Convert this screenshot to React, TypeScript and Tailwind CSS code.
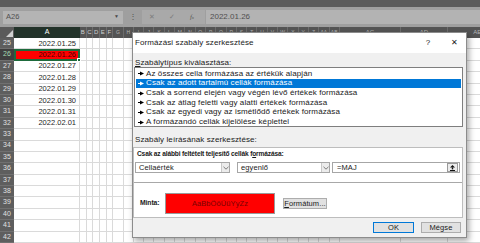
import React from 'react';

const narrowA = ['B', 'C', 'D', 'E', 'F'];
const narrowB = ['G', 'H', 'I', 'J', 'K', 'L', 'M', 'N', 'O', 'P', 'Q', 'R', 'S', 'T', 'U', 'V', 'W', 'X', 'Y', 'Z', 'AA', 'AB'];
const wide = [
  { l: 'AC', c: 'w-[61px]' },
  { l: 'AD', c: 'w-[47px]' },
  { l: 'AE', c: 'w-[60px]' },
];

const rows: { n: number; v: string }[] = [
  { n: 25, v: '2022.01.25' },
  { n: 26, v: '2022.01.26' },
  { n: 27, v: '2022.01.27' },
  { n: 28, v: '2022.01.28' },
  { n: 29, v: '2022.01.29' },
  { n: 30, v: '2022.01.30' },
  { n: 31, v: '2022.01.31' },
  { n: 32, v: '2022.02.01' },
  ...[33, 34, 35, 36, 37, 38, 39, 40, 41, 42].map((n) => ({ n, v: '' })),
];

const items = [
  'Az összes cella formázása az értékük alapján',
  'Csak az adott tartalmú cellák formázása',
  'Csak a sorrend elején vagy végén lévő értékek formázása',
  'Csak az átlag feletti vagy alatti értékek formázása',
  'Csak az egyedi vagy az ismétlődő értékek formázása',
  'A formázandó cellák kijelölése képlettel',
];

function Arrow({ white }: { white?: boolean }) {
  const c = white ? '#ffffff' : '#000000';
  return (
    <svg width="6" height="5" viewBox="0 0 6 5" className="shrink-0">
      <line x1="0" y1="2.5" x2="3" y2="2.5" stroke={c} strokeWidth="1" />
      <polygon points="2,0.5 6,2.5 2,4.5" fill={c} />
    </svg>
  );
}

function Chevron() {
  return (
    <svg width="6" height="4" viewBox="0 0 6 4">
      <polyline points="0.5,0.8 3,3.2 5.5,0.8" fill="none" stroke="#606060" strokeWidth="0.8" />
    </svg>
  );
}

function Row({ n, v }: { n: number; v: string }) {
  const sel = n === 26;
  return (
    <div className="flex h-[11.4px] shrink-0">
      <div
        className={
          sel
            ? 'w-[14px] shrink-0 flex items-center justify-center text-[7px] border-b border-[#707070] bg-[#3f3f3f] text-[#a6dcb0]'
            : 'w-[14px] shrink-0 flex items-center justify-center text-[7px] border-b border-[#707070] bg-[#5e5e5e] text-[#e0e0e0]'
        }
      >
        {n}
      </div>
      {sel ? (
        <div className="relative w-[66px] shrink-0 bg-[#ff0000] border-2 border-[#1e6b3c] text-[#4a0000] text-[7.5px] flex items-center justify-end pr-[2px]">
          {v}
          <div className="absolute z-10 -right-[3px] -bottom-[3px] w-[4px] h-[4px] bg-[#1e6b3c] border border-white" />
        </div>
      ) : (
        <div className="w-[66px] shrink-0 border-r border-b border-[#dadada] text-[7.5px] text-[#262626] flex items-center justify-end pr-[3px]">
          {v}
        </div>
      )}
      {narrowA.map((c) => (
        <div key={c} className="w-[6.67px] shrink-0 border-r border-b border-[#dadada]" />
      ))}
      {narrowB.map((c) => (
        <div key={c} className="w-[10.3px] shrink-0 border-r border-b border-[#dadada]" />
      ))}
      {wide.map((c) => (
        <div key={c.l} className={c.c + ' shrink-0 border-r border-b border-[#dadada]'} />
      ))}
    </div>
  );
}

export default function App() {
  return (
    <div className="relative w-[480px] h-[243px] overflow-hidden bg-white font-['Liberation_Sans',Arial,sans-serif] flex flex-col">
      {/* top strip */}
      <div className="h-[7px] shrink-0 bg-[#5b5b5b]" />
      {/* formula bar */}
      <div className="h-[20px] shrink-0 bg-[#9f9f9f] flex items-center">
        <div className="ml-[3px] w-[120px] h-[13px] bg-[#b4b4b4] flex items-center pl-[3px] pr-[4px] text-[7.5px] text-[#505050]">
          <span className="flex-1">A26</span>
          <span className="text-[5px] text-[#4a4a4a]">▼</span>
        </div>
        <div className="w-[19px] text-center text-[8px] text-[#505050] leading-none">⋮</div>
        <div className="w-[63px] h-[14px] bg-[#a9a9a9] flex items-center text-[7px] text-[#7c7c7c]">
          <span className="w-[20px] text-center">✕</span>
          <span className="w-[20px] text-center">✓</span>
          <span className="w-[20px] text-center italic font-['Liberation_Serif',serif] text-[#5a5a5a]">
            f<span className="text-[5px]">x</span>
          </span>
        </div>
        <div className="ml-[1px] flex-1 h-[14px] bg-[#b3b3b3] flex items-center pl-[4px] text-[8px] text-[#505050]">
          2022.01.26
        </div>
      </div>
      {/* column headers */}
      <div className="flex h-[11px] shrink-0 bg-[#545454]">
        <div className="relative w-[14px] shrink-0 bg-[#5a5a5a]">
          <svg width="7" height="7" viewBox="0 0 7 7" className="absolute right-[1px] bottom-[1px]">
            <polygon points="7,0 7,7 0,7" fill="#cfcfcf" />
          </svg>
        </div>
        <div className="w-[66px] shrink-0 bg-[#23332a] text-white text-[7px] flex items-center justify-center">A</div>
        {narrowA.map((c) => (
          <div key={c} className="w-[6.67px] shrink-0 border-r border-[#6c6c6c] text-[#d0d0d0] text-[6px] flex items-center justify-center">
            {c}
          </div>
        ))}
        {narrowB.map((c) => (
          <div key={c} className="w-[10.3px] shrink-0 border-r border-[#6c6c6c] text-[#b4b4b4] text-[5px] flex items-center justify-center overflow-hidden">
            {c}
          </div>
        ))}
        {wide.map((c) => (
          <div key={c.l} className={c.c + ' shrink-0 border-r border-[#6c6c6c] text-[#b4b4b4] text-[6px] flex items-center justify-center'}>
            {c.l}
          </div>
        ))}
      </div>
      {rows.map((r) => (
        <Row key={r.n} n={r.n} v={r.v} />
      ))}

      {/* dialog */}
      <div className="absolute left-[132px] top-[32px] w-[335px] h-[206px] bg-[#f0f0f0] border border-[#8c8c8c] shadow-[2px_3px_6px_rgba(0,0,0,0.35)] flex flex-col text-[8px] tracking-[0.1px] text-[#1a1a1a]">
        <div className="h-[20px] shrink-0 bg-white flex items-center pl-[2px]">
          <span className="flex-1">Formázási szabály szerkesztése</span>
          <span className="w-[10px] text-center text-[8px]">?</span>
          <span className="w-[10px] text-center text-[8px] ml-[17px] mr-[6px]">✕</span>
        </div>
        <div className="mt-[5px] h-[9px] pl-[2px] flex items-center">
          <span>
            <span className="underline">S</span>zabálytípus kiválasztása:
          </span>
        </div>
        <div className="ml-[1px] w-[329px] h-[60px] bg-white border border-[#7e7e7e] flex flex-col py-px px-px">
          {items.map((t, i) => (
            <div
              key={t}
              className={
                i === 1
                  ? 'h-[9.67px] flex items-center gap-[2px] pl-[2px] bg-[#0078d7] text-white'
                  : 'h-[9.67px] flex items-center gap-[2px] pl-[2px]'
              }
            >
              <Arrow white={i === 1} />
              <span>{t}</span>
            </div>
          ))}
        </div>
        <div className="mt-[8px] h-[10px] pl-[2px] flex items-center">Szabály leírásának szerkesztése:</div>
        <div className="mt-[2px] w-[330px] h-[71px] bg-white border border-[#bdbdbd] flex flex-col">
          <div className="mt-px h-[10px] pl-[3px] flex items-center font-bold text-[6.6px] tracking-[-0.15px]">
            <span>
              Csak az alábbi feltételt teljesítő cellák f<span className="underline">o</span>rmázása:
            </span>
          </div>
          <div className="mt-[3px] h-[11px] pl-[1px] flex text-[7.5px]">
            <div className="w-[95px] h-[11px] border border-[#a6a6a6] flex">
              <span className="flex-1 pl-[3px] flex items-center">Cellaérték</span>
              <span className="w-[8px] border-l border-[#c8c8c8] bg-[#ececec] flex items-center justify-center">
                <Chevron />
              </span>
            </div>
            <div className="ml-[7px] w-[93px] h-[11px] border border-[#a6a6a6] flex">
              <span className="flex-1 pl-[3px] flex items-center">egyenlő</span>
              <span className="w-[8px] border-l border-[#c8c8c8] bg-[#ececec] flex items-center justify-center">
                <Chevron />
              </span>
            </div>
            <div className="ml-[2px] w-[128px] h-[11px] border border-[#a6a6a6] flex items-center">
              <span className="flex-1 pl-[4px]">=MAJ</span>
              <span className="mr-[1px] w-[11px] h-[9px] border border-[#9a9a9a] bg-[#ececec] flex items-center justify-center">
                <svg width="5" height="6" viewBox="0 0 5 6">
                  <polygon points="2.5,0 5,2.6 0,2.6" fill="#111" />
                  <rect x="1.8" y="2.4" width="1.4" height="2" fill="#111" />
                  <rect x="0" y="5" width="5" height="1" fill="#111" />
                </svg>
              </span>
            </div>
          </div>
          <div className="mt-[9px] h-px bg-[#a8a8a8]" />
          <div className="mt-[10px] flex items-center pl-[6px]">
            <span className="w-[25px] font-bold text-[6.8px] tracking-[-0.1px]">Minta:</span>
            <div className="w-[110px] h-[21px] bg-[#ff0000] border border-[#9a9a9a] flex items-center justify-center text-[#7a0000] text-[7.5px]">
              AaBbÖöÜüYyZz
            </div>
            <div className="ml-[8px] w-[44px] h-[11px] bg-[#e1e1e1] border border-[#adadad] flex items-center justify-center text-[7.5px]">
              <span>
                <span className="underline">F</span>ormátum...
              </span>
            </div>
          </div>
        </div>
        <div className="mt-[4px] flex justify-end pr-[5px] text-[7.5px]">
          <div className="w-[41px] h-[11px] bg-[#e1e1e1] border border-[#0078d7] flex items-center justify-center">OK</div>
          <div className="ml-[7px] w-[40px] h-[11px] bg-[#e1e1e1] border border-[#adadad] flex items-center justify-center">Mégse</div>
        </div>
      </div>
    </div>
  );
}
